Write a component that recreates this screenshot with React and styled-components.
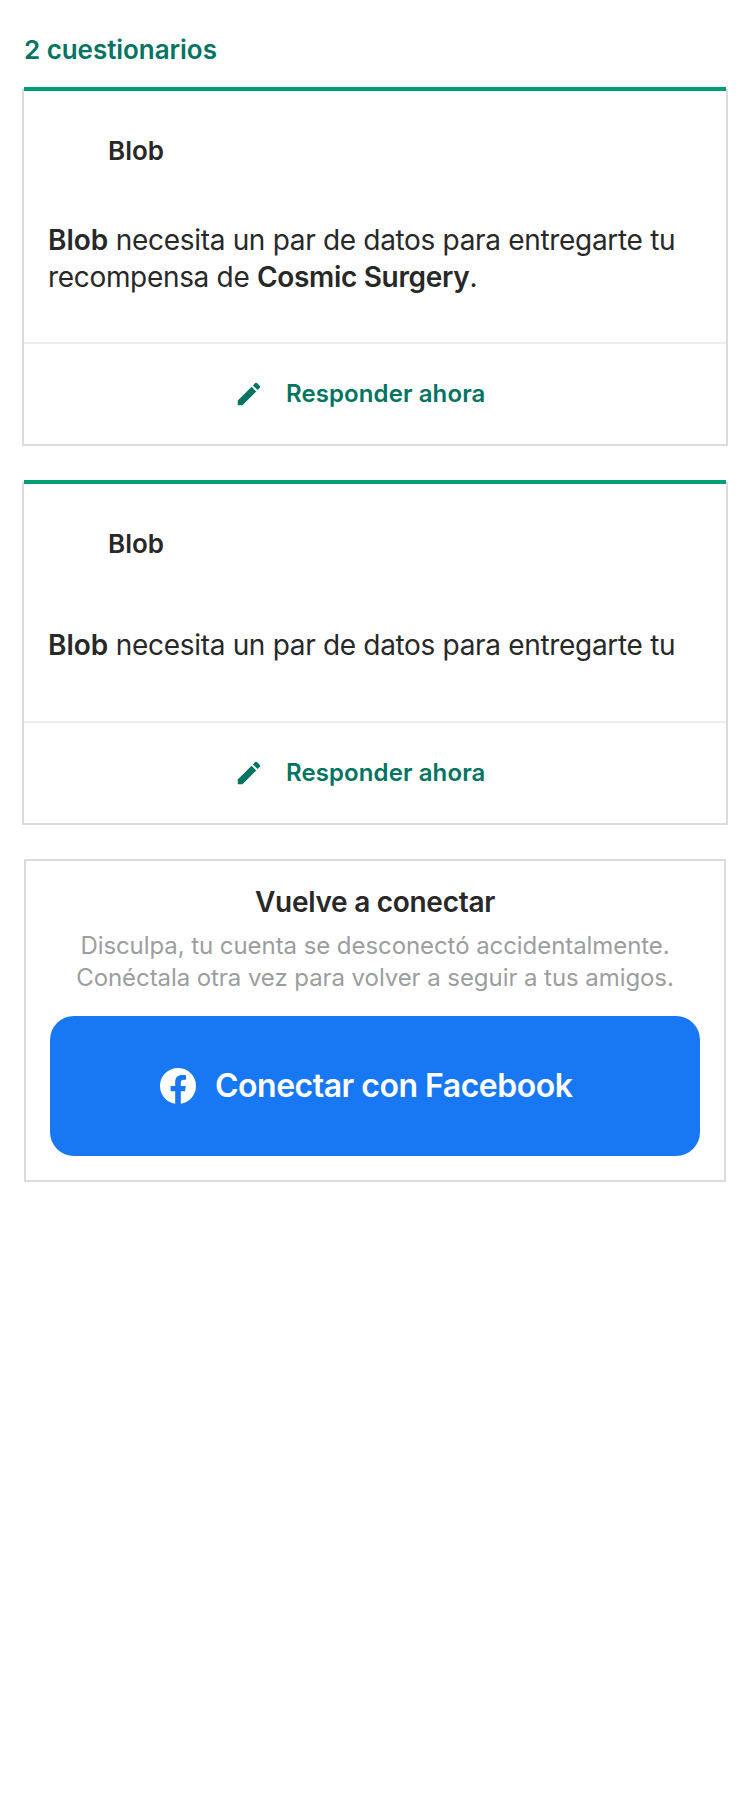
import React from 'react';
import styled, { createGlobalStyle } from 'styled-components';

const GlobalStyle = createGlobalStyle`
  * { box-sizing: border-box; }
  body {
    margin: 0;
    background: #ffffff;
    color: #282828;
    font-family: Inter, "Liberation Sans", sans-serif;
  }
  p, h1, h2, h3 { margin: 0; }
`;

const Page = styled.main`
  width: 750px;
  min-height: 1800px;
  padding: 34px 22px 0;
`;

const Count = styled.h1`
  padding-left: 2px;
  margin-bottom: 21px;
  font-size: 26px;
  line-height: 32px;
  font-weight: 600;
  letter-spacing: -0.05px;
  color: #037362;
`;

const SurveyCard = styled.section`
  margin-bottom: 34px;
`;

const Accent = styled.div`
  height: 4px;
  margin: 0 2px -2px;
  background: #009e74;
  position: relative;
`;

const CardBody = styled.div`
  border: 2px solid #dcdcdc;
  border-top: 0;
`;

const Creator = styled.h2`
  padding: 46px 0 0 84px;
  font-size: 26px;
  line-height: 32px;
  font-weight: 600;
  letter-spacing: 0;
`;

const Message = styled.div`
  height: ${(p) => p.$height}px;
  padding: ${(p) => p.$offset}px 0 0 24px;
`;

const MessageText = styled.p`
  max-height: ${(p) => p.$lines * 37}px;
  overflow: hidden;
  width: 660px;
  font-size: 28px;
  line-height: 37px;
  letter-spacing: -0.32px;

  strong { font-weight: 600; }
  strong:first-child { letter-spacing: 0; }
`;

const Respond = styled.div`
  display: flex;
  align-items: center;
  height: 102px;
  padding-left: 210px;
  gap: 22px;
  border-top: 2px solid #ededf2;
  color: #037362;
`;

const RespondLabel = styled.span`
  font-size: 24px;
  line-height: 30px;
  font-weight: 600;
  letter-spacing: 0.1px;
`;

const ConnectCard = styled.section`
  height: 323px;
  margin: 0 2px;
  padding: 24px 24px 0;
  border: 2px solid #dcdcdc;
  text-align: center;
`;

const ConnectTitle = styled.h2`
  font-size: 28px;
  line-height: 34px;
  font-weight: 600;
  letter-spacing: -0.28px;
`;

const ConnectText = styled.p`
  margin-top: 11px;
  font-size: 24px;
  line-height: 32px;
  letter-spacing: -0.07px;
  color: #9b9e9e;
  white-space: nowrap;
`;

const FacebookButton = styled.button`
  display: flex;
  align-items: center;
  width: 650px;
  height: 140px;
  margin-top: 22px;
  padding: 0 0 0 110px;
  gap: 19px;
  border: 0;
  border-radius: 24px;
  background: #1877f2;
  color: #ffffff;
  font: 600 32px/40px Inter, "Liberation Sans", sans-serif;
  letter-spacing: -0.5px;
`;

const PencilIcon = () => (
  <svg width="30" height="30" viewBox="0 0 24 24" fill="currentColor" aria-hidden="true">
    <path d="M3 17.25V21h3.75L17.81 9.94l-3.75-3.75L3 17.25zM20.71 7.04a1 1 0 0 0 0-1.41l-2.34-2.34a1 1 0 0 0-1.41 0l-1.83 1.83 3.75 3.75 1.83-1.83z" />
  </svg>
);

const FacebookIcon = () => (
  <svg width="36" height="36" viewBox="0 0 36 36" fill="currentColor" aria-hidden="true">
    <path d="M36 18A18 18 0 1 0 15.19 35.78V23.2H10.6V18h4.59v-3.97c0-4.5 2.68-7 6.8-7 1.97 0 4.03.35 4.03.35v4.43h-2.27c-2.24 0-2.94 1.39-2.94 2.82V18h5l-.8 5.2h-4.2v12.58A18 18 0 0 0 36 18z" />
  </svg>
);

const surveys = [
  { id: 1, creator: 'Blob', reward: 'Cosmic Surgery', lines: 2, height: 175, offset: 55 },
  { id: 2, creator: 'Blob', reward: 'Cosmic Surgery', lines: 1, height: 161, offset: 67 },
];

const Survey = ({ creator, reward, lines, height, offset }) => (
  <SurveyCard>
    <Accent />
    <CardBody>
      <Creator>{creator}</Creator>
      <Message $height={height} $offset={offset}>
        <MessageText $lines={lines}>
          <strong>{creator}</strong> necesita un par de datos para entregarte tu
          {lines > 1 && <> recompensa de <strong>{reward}</strong>.</>}
        </MessageText>
      </Message>
      <Respond>
        <PencilIcon />
        <RespondLabel>Responder ahora</RespondLabel>
      </Respond>
    </CardBody>
  </SurveyCard>
);

export default function App() {
  return (
    <>
      <GlobalStyle />
      <Page>
        <Count>2 cuestionarios</Count>
        {surveys.map((s) => <Survey key={s.id} {...s} />)}
        <ConnectCard>
          <ConnectTitle>Vuelve a conectar</ConnectTitle>
          <ConnectText>
            Disculpa, tu cuenta se desconectó accidentalmente.<br />
            Conéctala otra vez para volver a seguir a tus amigos.
          </ConnectText>
          <FacebookButton type="button">
            <FacebookIcon />
            <span>Conectar con Facebook</span>
          </FacebookButton>
        </ConnectCard>
      </Page>
    </>
  );
}
